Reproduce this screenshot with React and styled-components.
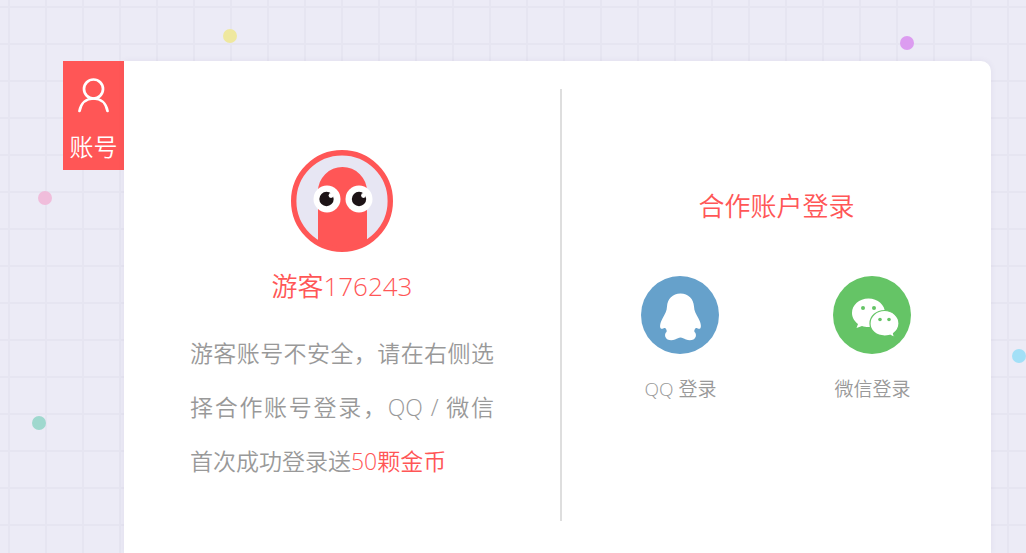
import React from "react";
import styled, { createGlobalStyle } from "styled-components";

const GlobalStyle = createGlobalStyle`
  * {
    box-sizing: border-box;
  }
  body {
    margin: 0;
    font-family: "Open Sans", "Noto Sans CJK SC", sans-serif;
    font-weight: 350;
    color: #999;
  }
`;

const Page = styled.div`
  position: relative;
  display: flex;
  align-items: flex-start;
  min-height: 100vh;
  padding: 61px 35px 0 63px;
  overflow: hidden;
  background-color: #ecebf6;
  background-image: linear-gradient(to right, #e6e5f1 2px, transparent 2px),
    linear-gradient(to bottom, #e6e5f1 2px, transparent 2px);
  background-size: 37px 37px;
  background-position: 8px 6px;
`;

const Dot = styled.i`
  position: absolute;
  left: ${(p) => p.$x}%;
  top: ${(p) => p.$y}px;
  width: 14px;
  height: 14px;
  border-radius: 50%;
  background: ${(p) => p.$color};
`;

const Tab = styled.button`
  display: flex;
  flex: none;
  flex-direction: column;
  align-items: center;
  gap: 18px;
  width: 61px;
  height: 109px;
  padding: 16px 0 0;
  border: 0;
  background: #ff5656;
  color: #fff;
  font: inherit;
  font-size: 24px;
  line-height: 32px;
  cursor: pointer;
`;

const Card = styled.main`
  display: grid;
  flex: 1;
  grid-template-columns: 65fr 2px 64fr;
  min-height: calc(100vh - 61px);
  padding: 28px 0 32px;
  border-radius: 0 10px 0 0;
  background: #fff;
  box-shadow: 0 0 6px rgba(90, 80, 130, 0.08);
`;

const Panel = styled.section`
  display: flex;
  flex-direction: column;
  align-items: center;
  padding-top: ${(p) => p.$top}px;
`;

const Divider = styled.div`
  background: #dedede;
`;

const Title = styled.h2`
  margin: 0;
  color: #ff5656;
  font-size: 26px;
  font-weight: 350;
  line-height: 36px;
`;

const Name = styled(Title)`
  margin-top: 16px;
`;

const Tip = styled.p`
  width: 304px;
  margin: 22px 0 0;
  font-size: 23px;
  line-height: 54px;
  text-align: justify;
`;

const Reward = styled.span`
  color: #ff5656;
`;

const Logins = styled.div`
  display: flex;
  gap: 112px;
  margin-top: 52px;
`;

const Login = styled.button`
  display: flex;
  flex-direction: column;
  align-items: center;
  gap: 21px;
  width: 80px;
  padding: 0;
  border: 0;
  background: none;
  color: #999;
  font: inherit;
  font-size: 19px;
  line-height: 28px;
  white-space: nowrap;
  cursor: pointer;
`;

const UserIcon = () => (
  <svg width="32" height="36" viewBox="0 0 32 36" fill="none" stroke="#fff" strokeWidth="2.7">
    <circle cx="15.5" cy="12" r="9.5" />
    <path d="M1.500 34C3 26 8.500 21.500 15.500 21.500S28 26 29.500 34" strokeLinecap="round" />
  </svg>
);

const Avatar = () => (
  <svg width="102" height="102" viewBox="0 0 102 102">
    <defs>
      <clipPath id="face">
        <circle cx="51" cy="51" r="50" />
      </clipPath>
    </defs>
    <circle cx="51" cy="51" r="49" fill="#e7e6f3" />
    <path
      d="M27 102V41.500a24.500 24.500 0 0 1 49 0V102z"
      fill="#ff5656"
      clipPath="url(#face)"
    />
    <circle cx="51" cy="51" r="48.300" fill="none" stroke="#ff5656" strokeWidth="5.400" />
    <circle cx="36" cy="49" r="13.500" fill="#fff" />
    <circle cx="68" cy="49" r="13.500" fill="#fff" />
    <circle cx="35.500" cy="49" r="7.200" fill="#1d1316" />
    <circle cx="68" cy="49" r="7.200" fill="#1d1316" />
    <circle cx="40" cy="45.500" r="2.400" fill="#fff" />
    <circle cx="72.500" cy="45.500" r="2.400" fill="#fff" />
  </svg>
);

const QQIcon = () => (
  <svg width="78" height="78" viewBox="0 0 78 78">
    <circle cx="39" cy="39" r="39" fill="#66a1cb" />
    <path
      fill="#fff"
      d="M39.500 17.500C31.500 17.500 26.500 23 26 30.500C25.800 35 24 38 21.500 42.500C19 47 18.500 51 19.800 52.500C21.500 53.200 23 51.500 24.200 52C25.500 53.500 26 54.500 25.500 56C24.200 57 23.800 58.500 24.200 60.500C25.500 64.500 30.500 65 34 63.500C36.500 62.500 37.500 61.500 39.500 61.500S42.500 62.500 45 63.500C48.500 65 53.500 64.500 54.800 60.500C55.200 58.500 54.800 57 53.500 56C53 54.500 53.500 53.500 54.800 52C56 51.500 57.500 53.200 59.200 52.500C60.500 51 60 47 57.500 42.500C55 38 53.200 35 53 30.500C52.500 23 47.500 17.500 39.500 17.500Z"
    />
  </svg>
);

const WechatIcon = () => (
  <svg width="78" height="78" viewBox="0 0 78 78">
    <circle cx="39" cy="39" r="39" fill="#65c466" />
    <path
      fill="#fff"
      d="M35.500 22.500C26 22.500 19 29 19 37C19 41.500 21.500 45.500 25 48L23.500 52L29 50C31 50.700 33 51 35.500 51C45 51 52 45 52 37S45 22.500 35.500 22.500Z"
    />
    <path
      fill="#fff"
      stroke="#65c466"
      strokeWidth="1.200"
      d="M51.500 34.500C43.500 34.500 37 40 37 47.500S43.500 60 51.500 60C53.500 60 55.500 59.700 57 59.200L61.500 61.500L60.500 57.500C63.800 55 66 51.500 66 47.500C66 40 59.500 34.500 51.500 34.500Z"
    />
    <g fill="#65c466">
      <circle cx="30" cy="32" r="2" />
      <circle cx="41" cy="32" r="2" />
      <circle cx="47" cy="43.500" r="1.800" />
      <circle cx="56" cy="43.500" r="1.800" />
    </g>
  </svg>
);

const dots = [
  { x: 21.7, y: 29, color: "#efe89f" },
  { x: 87.7, y: 36, color: "#dc9cf0" },
  { x: 3.7, y: 191, color: "#f0bddb" },
  { x: 98.6, y: 349, color: "#a3e0f7" },
  { x: 3.1, y: 416, color: "#9fd8ce" },
];

const App = () => {
  return (
    <Page>
      <GlobalStyle />
      {dots.map((d) => (
        <Dot key={d.color} $x={d.x} $y={d.y} $color={d.color} />
      ))}
      <Tab type="button">
        <UserIcon />
        账号
      </Tab>
      <Card>
        <Panel $top={61}>
          <Avatar />
          <Name>游客176243</Name>
          <Tip>
            游客账号不安全，请在右侧选择合作账号登录，QQ / 微信首次成功登录送
            <Reward>50颗金币</Reward>
          </Tip>
        </Panel>
        <Divider />
        <Panel $top={99}>
          <Title>合作账户登录</Title>
          <Logins>
            <Login type="button">
              <QQIcon />
              QQ 登录
            </Login>
            <Login type="button">
              <WechatIcon />
              微信登录
            </Login>
          </Logins>
        </Panel>
      </Card>
    </Page>
  );
};

export default App;
